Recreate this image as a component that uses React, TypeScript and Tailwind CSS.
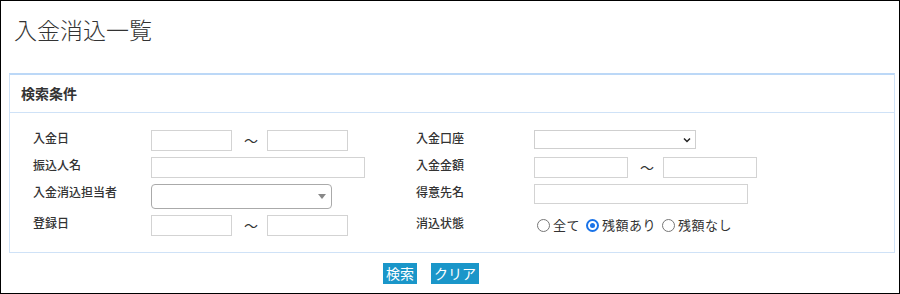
import React from 'react';

const font = { fontFamily: '"Noto Sans CJK JP", "Noto Sans", sans-serif' };

function TextBox({ w }: { w: string }) {
  return <div className={`h-[21px] border border-[#d3d3d3] bg-white ${w}`} />;
}

function Label({ children }: { children: React.ReactNode }) {
  return <div className="w-[118px] shrink-0 text-[12px] leading-[16px] font-medium text-[#333]">{children}</div>;
}

function Range({ w, gap }: { w: string; gap: string }) {
  return (
    <div className="flex items-center">
      <div className={`h-[21px] border border-[#d3d3d3] ${w}`} />
      <span className={`text-[14px] text-[#333] ${gap}`}>～</span>
      <div className={`h-[21px] border border-[#d3d3d3] ${w}`} />
    </div>
  );
}

function Radio({ checked, label }: { checked?: boolean; label: string }) {
  return (
    <label className="flex items-center gap-[3px] mr-[6px]">
      <span
        className={`w-[13px] h-[13px] rounded-full border flex items-center justify-center ${
          checked ? 'border-[#1a73e8] border-2' : 'border-[#767676]'
        }`}
      >
        {checked && <span className="w-[5px] h-[5px] rounded-full bg-[#1a73e8]" />}
      </span>
      <span className="text-[13px] leading-[16px] tracking-[0.5px] text-[#333]">{label}</span>
    </label>
  );
}

export default function App() {
  return (
    <div style={font} className="w-[900px] h-[294px] border border-black bg-white overflow-hidden">
      <h1 className="pl-[13px] pt-[12px] text-[23px] leading-[33px] font-light text-[#333]">入金消込一覧</h1>

      <div className="mt-[27px] ml-[8px] w-[886px] border border-t-2 border-[#cfe2f7] border-t-[#bcd8f7]">
        <div className="h-[38px] flex items-center pl-[11px] border-b border-[#cfe2f7]">
          <span className="text-[14px] font-bold text-[#333]">検索条件</span>
        </div>

        <div className="grid grid-cols-[383px_1fr] gap-y-[6px] pl-[23px] pt-[17px] pb-[16px]">
          {/* row 1 */}
          <div className="flex items-start">
            <Label>入金日</Label>
            <Range w="w-[81px]" gap="mx-[12px] w-[11px]" />
          </div>
          <div className="flex items-start">
            <Label>入金口座</Label>
            <div className="w-[162px] h-[19px] border border-[#cfcfcf] flex items-center justify-end pr-[4px]">
              <svg width="8" height="6" viewBox="0 0 8 6">
                <path d="M1 1.5 L4 4.5 L7 1.5" fill="none" stroke="#222" strokeWidth="1.5" />
              </svg>
            </div>
          </div>

          {/* row 2 */}
          <div className="flex items-start">
            <Label>振込人名</Label>
            <TextBox w="w-[214px]" />
          </div>
          <div className="flex items-start">
            <Label>入金金額</Label>
            <Range w="w-[94px]" gap="mx-[12px] w-[11px]" />
          </div>

          {/* row 3 */}
          <div className="flex items-start">
            <Label>入金消込担当者</Label>
            <div className="w-[181px] h-[25px] border border-[#aaa] rounded-[4px] flex items-center justify-end pr-[5px]">
              <svg width="8" height="5" viewBox="0 0 8 5">
                <path d="M0 0 L8 0 L4 5 Z" fill="#888" />
              </svg>
            </div>
          </div>
          <div className="flex items-start">
            <Label>得意先名</Label>
            <div className="w-[214px] h-[20px] border border-[#d3d3d3]" />
          </div>

          {/* row 4 */}
          <div className="flex items-start">
            <Label>登録日</Label>
            <Range w="w-[81px]" gap="mx-[12px] w-[11px]" />
          </div>
          <div className="flex items-start">
            <Label>消込状態</Label>
            <div className="flex items-center pt-[2px] pl-[3px]">
              <Radio label="全て" />
              <Radio checked label="残額あり" />
              <Radio label="残額なし" />
            </div>
          </div>
        </div>
      </div>

      <div className="flex gap-[14px] pl-[382px] pt-[10px]">
        <button className="h-[21px] px-[3px] bg-[#1a96c9] text-white text-[14px] leading-[21px]">検索</button>
        <button className="h-[21px] px-[3px] bg-[#1a96c9] text-white text-[14px] leading-[21px]">クリア</button>
      </div>
    </div>
  );
}
